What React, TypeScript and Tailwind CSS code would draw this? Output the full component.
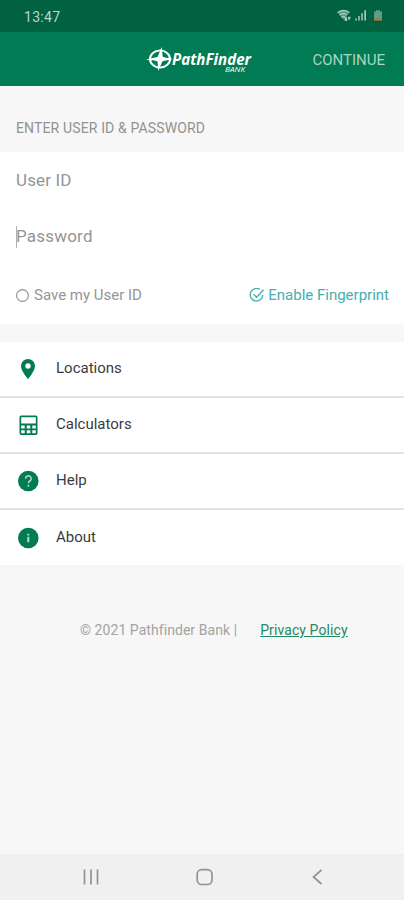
import type { ReactNode } from "react";

function StatusIcons() {
  return (
    <svg width="50" height="16" viewBox="0 0 50 16" className="text-[#a3cbb9]" fill="currentColor">
      <path d="M2 4.8Q7.5 .2 13 4.8L7.5 11.8Z" opacity=".5" />
      <path
        d="M1.5 4.8Q7.5.2 13.5 4.8M3.5 7Q7.5 4 11 7M5.5 9.2Q7.5 7.8 9 9.2"
        fill="none"
        stroke="currentColor"
        strokeWidth="1.3"
      />
      <path d="M8.6 10.2l1.300-2 1.300 2v2.800h-2.600zM12 8.800h2.400v1.400l-1.200 2-1.200-1.400z" />
      <path d="M19 10.5h2v2h-2zM22 8h2v4.5h-2zM25 5.2h2v7.3h-2z" opacity=".75" />
      <path d="M28.300 2.2h1.700v10.3h-1.700z" />
      <path d="M38 3.5h2V2.2h4v1.3h2v7.3h-8z" fill="#5d9f86" />
      <path d="M38 10.6h8v2h-8z" fill="#c37a38" />
    </svg>
  );
}

function Logo() {
  return (
    <svg width="108" height="28" viewBox="0 0 108 28" className="overflow-visible text-white" fill="currentColor">
      <ellipse cx="14" cy="13" rx="10" ry="8.6" fill="none" stroke="currentColor" strokeWidth="2" />
      <path d="M15.8 1l1 9.8L27 13l-10.500 2.200L12.200 25l-.7-9.600L0 13.400l11.500-2.400z" />
      <path d="M17.200 5.200v5.200l4.800 1.200M10.800 20.600v-5l-4.800-1.200" fill="none" stroke="#007b53" strokeWidth=".8" />
      <text
        x="26"
        y="18.5"
        textLength="79"
        lengthAdjust="spacingAndGlyphs"
        fontSize="16.500"
        fontWeight="700"
        fontStyle="italic"
        fontFamily="'Noto Sans', 'Open Sans', sans-serif"
      >
        PathFinder
      </text>
      <text
        x="79"
        y="26"
        textLength="20"
        lengthAdjust="spacingAndGlyphs"
        fontSize="7.5"
        fontStyle="italic"
        fontFamily="'Open Sans', sans-serif"
      >
        BANK
      </text>
    </svg>
  );
}

function PinIcon() {
  return (
    <svg width="24" height="24" viewBox="0 0 24 24" fill="currentColor">
      <path
        fillRule="evenodd"
        d="M12 2a7 7 0 0 0-7 7c0 5 7 13 7 13s7-8 7-13a7 7 0 0 0-7-7zm0 4.3a2.7 2.7 0 1 1 0 5.4 2.7 2.7 0 0 1 0-5.4z"
      />
    </svg>
  );
}

function CalculatorIcon() {
  return (
    <svg width="24" height="24" viewBox="0 0 24 24" fill="currentColor">
      <path
        fillRule="evenodd"
        d="M5.2 2.500h14.600a1.700 1.700 0 0 1 1.700 1.700v16.100a1.700 1.700 0 0 1-1.700 1.700H5.200a1.700 1.700 0 0 1-1.700-1.700V4.200a1.700 1.700 0 0 1 1.700-1.700zM5.200 4.200v6.300h14.600V4.200zM5.200 12.500v3h3.500v-3zM10.700 12.500v3h3.600v-3zM16.300 12.500v3h3.500v-3zM5.200 17.300v3h3.500v-3zM10.700 17.300v3h3.600v-3zM16.300 17.300v3h3.500v-3z"
      />
    </svg>
  );
}

function HelpIcon() {
  return (
    <svg width="24" height="24" viewBox="0 0 24 24" fill="none">
      <circle cx="12.3" cy="12" r="10.3" fill="currentColor" />
      <path
        d="M9.600 9.700a2.800 2.800 0 1 1 4.300 2.300c-1.100.7-1.500 1.200-1.500 2.300"
        stroke="#b5dccb"
        strokeWidth="1.5"
      />
      <circle cx="12.3" cy="16.7" r="1" fill="#b5dccb" />
    </svg>
  );
}

function InfoIcon() {
  return (
    <svg width="24" height="24" viewBox="0 0 24 24">
      <circle cx="12.3" cy="12" r="10.3" fill="currentColor" />
      <path d="M11.300 7.800h2v1.700h-2zM11.300 10.800h2v5.400h-2z" fill="#b5dccb" />
    </svg>
  );
}

const menu: { label: string; icon: ReactNode }[] = [
  { label: "Locations", icon: <PinIcon /> },
  { label: "Calculators", icon: <CalculatorIcon /> },
  { label: "Help", icon: <HelpIcon /> },
  { label: "About", icon: <InfoIcon /> },
];

function LoginForm() {
  return (
    <section className="h-[172px] bg-white text-[#959595]">
      <div className="flex h-[57px] items-center px-4 text-[17px] tracking-[0.15px]">User ID</div>
      <div className="flex h-14 items-center px-4 text-[17px] tracking-[0.2px]">
        <span className="-mr-px h-[22px] w-px bg-[#b0b0b0]" />
        Password
      </div>
      <div className="flex h-[61px] items-center justify-between pr-[15px] pl-4 text-[15px]">
        <div className="flex items-center">
          <svg width="13" height="14" viewBox="0 0 13 14" fill="none" className="mr-[5px]">
            <circle cx="6.5" cy="6.5" r="5.9" stroke="currentColor" strokeWidth="1.2" />
          </svg>
          Save my User ID
        </div>
        <div className="flex items-center text-[#45afb0]">
          <svg
            width="16"
            height="16"
            viewBox="0 0 16 16"
            fill="none"
            stroke="currentColor"
            strokeWidth="1.3"
            className="mr-[3px]"
          >
            <path d="M10.800 1.400A6.300 6.300 0 1 0 13.800 6.700M4.600 6.300l3 3 7-7.600" />
          </svg>
          Enable Fingerprint
        </div>
      </div>
    </section>
  );
}

export default function App() {
  return (
    <div className="flex h-[900px] w-[404px] flex-col overflow-hidden bg-[#f7f7f7] font-['Roboto',sans-serif]">
      <div className="flex h-8 shrink-0 items-center justify-between bg-[#006241] pr-[18px] pl-6 text-[#b8d6c9]">
        <span className="pt-px text-sm tracking-[0.3px]">13:47</span>
        <StatusIcons />
      </div>

      <header className="flex h-[54px] shrink-0 items-center justify-between bg-[#007b53] pt-px pr-[19px] pl-[146px]">
        <Logo />
        <span className="pt-px text-[15px] text-[#a9d5c4]">CONTINUE</span>
      </header>

      <h1 className="flex h-[66px] shrink-0 items-center px-4 pt-[17px] text-sm tracking-[0.14px] text-[#929292]">
        ENTER USER ID & PASSWORD
      </h1>
      <LoginForm />

      <nav className="mt-[18px] bg-white">
        {menu.map(({ label, icon }, i) => (
          <div
            key={label}
            className={`flex items-center gap-4 pl-4 text-[#007b53] ${
              i < menu.length - 1 ? "h-14 border-b-2 border-[#e3e3e3]" : "h-[55px]"
            }`}
          >
            {icon}
            <span className="-mt-px text-[15px] text-[#3b3b3b]">{label}</span>
          </div>
        ))}
      </nav>

      <footer className="mt-[55px] flex pl-20 text-sm leading-5 text-[#a3a3a3]">
        <span className="tracking-[0.06px]">© 2021 Pathfinder Bank |</span>
        <span className="ml-[23px] tracking-[0.1px] text-[#248965] underline">Privacy Policy</span>
      </footer>

      <div className="mt-auto flex h-[46px] items-center justify-between bg-[#f0f0f0] pr-[74px] pl-[79px] text-[#929292]">
        <svg width="24" height="24" viewBox="0 0 24 24" fill="none" stroke="currentColor" strokeWidth="1.7">
          <path d="M5.500 4.500v15M12 4.500v15M18.500 4.500v15" />
        </svg>
        <svg width="24" height="24" viewBox="0 0 24 24" fill="none" stroke="currentColor" strokeWidth="1.7">
          <rect x="4.2" y="4.7" width="14.8" height="14.8" rx="4.5" />
        </svg>
        <svg width="24" height="24" viewBox="0 0 24 24" fill="none" stroke="currentColor" strokeWidth="1.7">
          <path d="M15.500 5l-8 7 8 7" />
        </svg>
      </div>
    </div>
  );
}
